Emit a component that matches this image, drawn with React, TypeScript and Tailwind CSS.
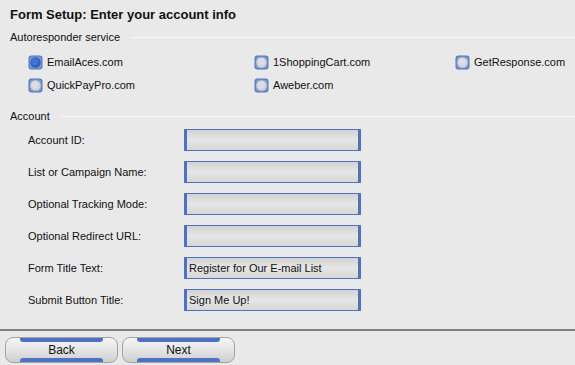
import React from "react";

// Autoresponder choices, laid out in three columns
const services = [
  { name: "EmailAces.com", checked: true },
  { name: "1ShoppingCart.com", checked: false },
  { name: "GetResponse.com", checked: false },
  { name: "QuickPayPro.com", checked: false },
  { name: "Aweber.com", checked: false },
];

const fields = [
  { label: "Account ID:", value: "" },
  { label: "List or Campaign Name:", value: "" },
  { label: "Optional Tracking Mode:", value: "" },
  { label: "Optional Redirect URL:", value: "" },
  { label: "Form Title Text:", value: "Register for Our E-mail List" },
  { label: "Submit Button Title:", value: "Sign Me Up!" },
];

function Radio({ checked }: { checked: boolean }) {
  return (
    <svg width="15" height="15" viewBox="0 0 15 15" className="shrink-0">
      <rect x="0.5" y="0.5" width="14" height="14" rx="3" fill="#4f76bf" />
      <rect x="1.5" y="1.5" width="12" height="12" rx="2.5" fill="#7d9ad0" />
      <circle cx="7.5" cy="7.5" r="5.2" fill={checked ? "#2f5fc0" : "#cfd2d6"} />
      <circle cx="7" cy="6.8" r="3.6" fill={checked ? "#3f73d6" : "#dcdde0"} />
    </svg>
  );
}

function SectionHeader({ title }: { title: string }) {
  return (
    <div className="flex items-center gap-[10px] pl-[10px] h-[15px]">
      <span className="text-[11px] leading-none text-[#111]">{title}</span>
      <div className="flex-1 h-px bg-[#c4c4c4] border-b border-[#f7f7f7]" />
    </div>
  );
}

function WizardButton({ label }: { label: string }) {
  return (
    <button className="w-[113px] h-[26px] flex flex-col rounded-[8px] border border-[#a2a2a2] bg-gradient-to-b from-[#f6f6f6] via-[#e4e4e4] to-[#cfcfcf]">
      <div className="mx-[14px] h-[4px] bg-[#4d72c4] rounded-b-[3px]" />
      <div className="flex-1 flex items-center justify-center text-[12px] leading-none text-[#111]">
        {label}
      </div>
      <div className="mx-[14px] h-[4px] bg-[#4d72c4] rounded-t-[3px]" />
    </button>
  );
}

export default function App() {
  return (
    <div
      className="w-[575px] h-[365px] bg-[#e9e9e9] overflow-hidden"
      style={{ fontFamily: '"Liberation Sans", Arial, sans-serif' }}
    >
      {/* Title */}
      <div className="h-[30px] pt-[7px] pl-[10px]">
        <h1 className="text-[13px] leading-[15px] font-bold text-[#111]">
          Form Setup: Enter your account info
        </h1>
      </div>

      <SectionHeader title="Autoresponder service" />

      {/* Radio options */}
      <div className="grid grid-cols-[226px_201px_1fr] pl-[28px] pt-[6px]">
        {services.map((s) => (
          <label key={s.name} className="flex items-center gap-[4px] h-[23px]">
            <Radio checked={s.checked} />
            <span className="text-[11px] leading-none text-[#111]">{s.name}</span>
          </label>
        ))}
      </div>

      <div className="h-[12px]" />
      <SectionHeader title="Account" />

      {/* Account fields */}
      <div>
        {fields.map((f) => (
          <div key={f.label} className="flex items-center h-[32px] pl-[28px]">
            <span className="w-[156px] text-[11px] leading-none text-[#111]">{f.label}</span>
            <div className="w-[177px] h-[22px] flex items-center border-y border-x-[3px] border-[#4d72c0] bg-gradient-to-b from-[#d2d2d2] via-[#e6e6e6] to-[#d6d6d6] pl-[2px] text-[11px] leading-none text-[#111]">
              {f.value}
            </div>
          </div>
        ))}
      </div>

      {/* Footer */}
      <div className="mt-[13px] h-[2px] bg-[#7c8080]" />
      <div className="flex gap-[4px] pl-[5px] pt-[6px]">
        <WizardButton label="Back" />
        <WizardButton label="Next" />
      </div>
    </div>
  );
}
